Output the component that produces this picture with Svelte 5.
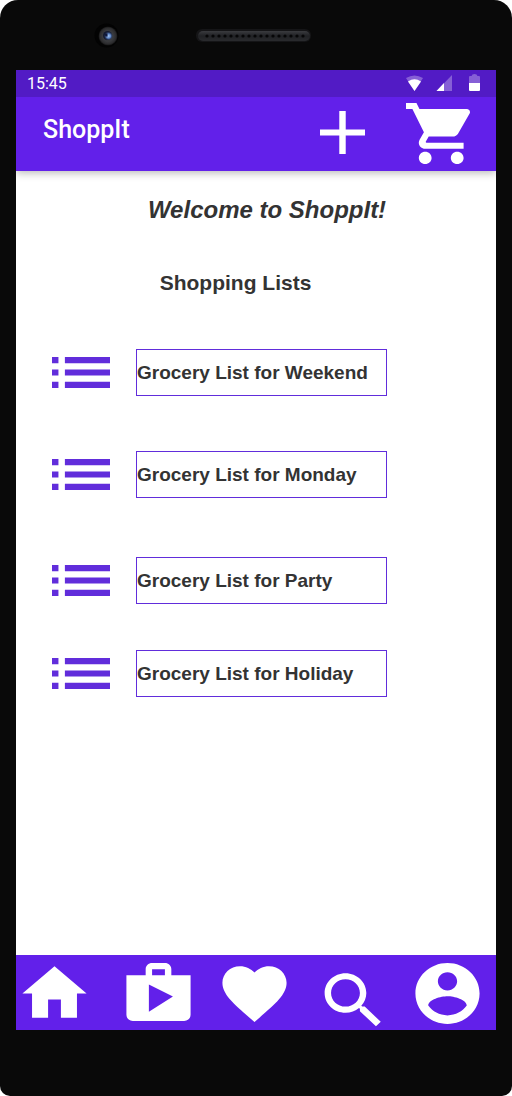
<script>
  const lists = [
    'Grocery List for Weekend',
    'Grocery List for Monday',
    'Grocery List for Party',
    'Grocery List for Holiday'
  ];

  const tabs = [
    { name: 'Home', path: 'M10 20v-6h4v6h5v-8h3L12 3 2 12h3v8z' },
    {
      name: 'Shop',
      path: 'M16 6V4c0-1.11-.89-2-2-2h-4c-1.11 0-2 .89-2 2v2H2v13c0 1.11.89 2 2 2h16c1.11 0 2-.89 2-2V6h-6zm-6-2h4v2h-4V4zM9 18V9l7.5 4L9 18z'
    },
    {
      name: 'Favorites',
      path: 'M12 21.35l-1.45-1.32C5.4 15.36 2 12.28 2 8.5 2 5.42 4.42 3 7.5 3c1.74 0 3.41.81 4.5 2.09C13.09 3.81 14.76 3 16.5 3 19.58 3 22 5.42 22 8.5c0 3.78-3.4 6.86-8.55 11.54L12 21.35z'
    },
    {
      name: 'Search',
      low: true,
      path: 'M15.5 14h-.79l-.28-.27C15.41 12.59 16 11.11 16 9.5 16 5.91 13.09 3 9.5 3S3 5.91 3 9.5 5.91 16 9.5 16c1.61 0 3.09-.59 4.23-1.57l.27.28v.79l5 4.99L20.49 19l-4.99-5zm-6 0C7.01 14 5 11.99 5 9.5S7.01 5 9.5 5 14 7.01 14 9.5 11.99 14 9.5 14z'
    },
    {
      name: 'Account',
      path: 'M12 2C6.48 2 2 6.48 2 12s4.48 10 10 10 10-4.48 10-10S17.52 2 12 2zm0 3c1.66 0 3 1.34 3 3s-1.34 3-3 3-3-1.34-3-3 1.34-3 3-3zm0 14.2c-2.5 0-4.71-1.28-6-3.22.03-1.99 4-3.08 6-3.08 1.99 0 5.97 1.09 6 3.08-1.29 1.94-3.5 3.22-6 3.22z'
    }
  ];

  const holes = Array.from({ length: 17 }, (_, i) => 11 + i * 6);
</script>

<div class="phone">
  <div class="bezel">
    <svg class="camera" width="26" height="26" viewBox="0 0 26 26" aria-hidden="true">
      <defs>
        <radialGradient id="ring">
          <stop offset="0" stop-color="#2c2d33" />
          <stop offset="0.55" stop-color="#3a3b3e" />
          <stop offset="0.85" stop-color="#2b2b2d" />
          <stop offset="1" stop-color="#111" />
        </radialGradient>
        <radialGradient id="glass">
          <stop offset="0" stop-color="#a9c9f2" />
          <stop offset="0.5" stop-color="#5c85c8" />
          <stop offset="1" stop-color="#2c3c60" stop-opacity="0" />
        </radialGradient>
      </defs>
      <circle cx="12.5" cy="12.5" r="12" fill="#030303" />
      <circle cx="14" cy="13" r="9.5" fill="url(#ring)" />
      <circle cx="13.5" cy="12.5" r="4.5" fill="#141a30" />
      <circle cx="14.5" cy="13" r="4.5" fill="url(#glass)" />
      <path d="M10.5 10.5h3v3h-2z" fill="#10183a" />
    </svg>
    <svg class="speaker" width="116" height="14" viewBox="0 0 116 14" aria-hidden="true">
      <defs>
        <linearGradient id="grille" x2="0" y2="1">
          <stop offset="0" stop-color="#3a3b3f" />
          <stop offset="0.5" stop-color="#202124" />
          <stop offset="1" stop-color="#2a2b2e" />
        </linearGradient>
      </defs>
      <rect width="115" height="13" rx="6" fill="#151517" />
      <rect x="2" y="2" width="112" height="10" rx="5" fill="url(#grille)" />
      {#each holes as x}
        <circle cx={x} cy="7" r="1.6" fill="#060607" />
      {/each}
    </svg>
  </div>

  <div class="screen">
    <div class="status">
      <span class="time">15:45</span>
      <svg width="74" height="18" viewBox="0 0 74 18" fill="#fff" aria-hidden="true">
        <path d="M0 3Q8.500 -2 17 3L8.500 16z" opacity=".3" />
        <path d="M2 6.500Q8.500 2 15 6.500L8.500 16z" />
        <path d="M46 0v16H30.500z" opacity=".3" />
        <path d="M38 8v8h-7.500z" />
        <path d="M63 8V2q0-1 1-1h1.500q.5-2 3-2t3 2H73q1 0 1 1v6z" opacity=".3" />
        <path d="M63 8h11v7q0 1-1 1h-9q-1 0-1-1z" />
      </svg>
    </div>

    <header>
      <h1>ShoppIt</h1>
      <button class="add" aria-label="Add list">
        <svg width="45" height="43" viewBox="5 5 14 14" preserveAspectRatio="none" fill="#fff">
          <path d="M19 13h-6v6h-2v-6H5v-2h6V5h2v6h6v2z" />
        </svg>
      </button>
      <button class="cart" aria-label="Cart">
        <svg width="64" height="61" viewBox="1 2 20 20" preserveAspectRatio="none" fill="#fff">
          <path d="M7 18c-1.100 0-1.990.9-1.990 2S5.900 22 7 22s2-.9 2-2-.9-2-2-2zM1 2v2h2l3.600 7.590-1.350 2.450c-.16.28-.25.61-.25.96 0 1.100.9 2 2 2h12v-2H7.420c-.14 0-.25-.11-.25-.25l.03-.12.9-1.630h7.450c.75 0 1.410-.41 1.750-1.030l3.580-6.490c.08-.14.12-.31.12-.48 0-.55-.45-1-1-1H5.210l-.94-2H1zm16 16c-1.100 0-1.990.9-1.990 2s.89 2 1.990 2 2-.9 2-2-.9-2-2-2z" />
        </svg>
      </button>
    </header>

    <main>
      <p class="welcome">Welcome to ShoppIt!</p>
      <h2>Shopping Lists</h2>
      <ul>
        {#each lists as list}
          <li>
            <svg width="58" height="31" viewBox="3 7 18 10" preserveAspectRatio="none" fill="#612ddb" aria-hidden="true">
              <path d="M3 13h2v-2H3v2zm0 4h2v-2H3v2zm0-8h2V7H3v2zm4 4h14v-2H7v2zm0 4h14v-2H7v2zM7 7v2h14V7H7z" />
            </svg>
            <button class="list">{list}</button>
          </li>
        {/each}
      </ul>
    </main>

    <nav>
      {#each tabs as tab}
        <button class:low={tab.low} aria-label={tab.name}>
          <svg width="77" height="73" viewBox="0 0 24 24" preserveAspectRatio="none" fill="#fff">
            <path d={tab.path} />
          </svg>
        </button>
      {/each}
    </nav>
  </div>
</div>

<style>
  :global(body) {
    margin: 0;
    background: #fff;
  }

  .phone {
    box-sizing: border-box;
    min-height: 100vh;
    padding: 0 16px 66px;
    display: flex;
    flex-direction: column;
    background: #090909;
    border-radius: 18px 18px 10px 10px;
    font-family: 'Liberation Sans', Arial, sans-serif;
  }

  .bezel {
    height: 72px;
    margin-bottom: -2px;
    display: grid;
    grid-template-columns: 1fr auto 1fr;
    align-items: center;
  }

  .camera {
    margin-left: 78px;
  }

  .speaker {
    margin-right: 5px;
  }

  .screen {
    flex: 1;
    display: flex;
    flex-direction: column;
    background: #fff;
  }

  .status {
    height: 27px;
    padding: 0 16px 0 11px;
    display: flex;
    align-items: center;
    justify-content: space-between;
    background: #521bc5;
  }

  .status svg {
    overflow: visible;
  }

  .time {
    color: #fff;
    font: 16px/28px Roboto, sans-serif;
  }

  header {
    height: 74px;
    padding: 0 26px 0 27px;
    box-sizing: border-box;
    display: flex;
    align-items: flex-start;
    background: #6220ea;
    box-shadow: 0 2px 8px rgba(0, 0, 0, 0.28);
    clip-path: inset(0 0 -12px);
  }

  h1 {
    margin: 18px auto 0 0;
    color: #fff;
    font: 500 25px/30px Roboto, sans-serif;
  }

  button {
    padding: 0;
    border: 0;
    background: none;
    cursor: pointer;
  }

  svg {
    display: block;
  }

  .add {
    margin: 14px 41px 0 0;
  }

  .cart {
    margin-top: 6px;
  }

  main {
    flex: 1;
    color: #333;
  }

  .welcome {
    margin: 24px 0 0;
    padding-left: 22px;
    text-align: center;
    font: italic bold 24px/30px 'Liberation Sans', Arial, sans-serif;
  }

  h2 {
    margin: 43px 0 0;
    padding-right: 41px;
    text-align: center;
    font-size: 21px;
    line-height: 30px;
  }

  ul {
    margin: 51px 109px 0 36px;
    padding: 0;
    list-style: none;
  }

  li {
    margin-bottom: 55px;
    display: flex;
    align-items: center;
    gap: 26px;
  }

  li:nth-child(2) {
    margin-bottom: 59px;
  }

  li:nth-child(3) {
    margin-bottom: 46px;
  }

  .list {
    flex: 1;
    height: 47px;
    padding: 0;
    border: 1px solid #612ddb;
    color: #333;
    text-align: left;
    white-space: nowrap;
    font: bold 19px/24px 'Liberation Sans', Arial, sans-serif;
  }

  nav {
    height: 75px;
    display: grid;
    grid-template-columns: 104fr 96fr 99fr 94fr 87fr;
    justify-items: start;
    align-items: start;
    background: #6220ea;
  }

  nav button {
    padding-top: 2px;
  }

  nav .low {
    padding-top: 9px;
  }
</style>
